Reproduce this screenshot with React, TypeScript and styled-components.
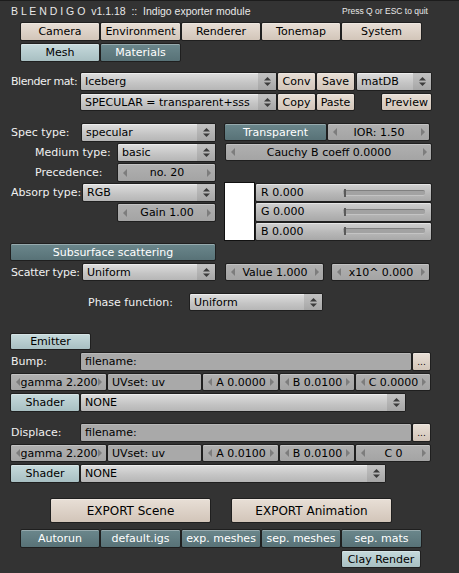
import React from 'react';
import styled, { createGlobalStyle, css } from 'styled-components';

const Global = createGlobalStyle`
  html, body { margin: 0; padding: 0; background: #333333; }
  body { font-family: "DejaVu Sans", "Liberation Sans", sans-serif; }
`;

const Page = styled.div`
  width: 459px;
  height: 573px;
  box-sizing: border-box;
  overflow: hidden;
  background: #333333;
  border-top: 1px solid #1c1c1c;
  font-size: 11px;
  color: #000;
`;

const TitleBar = styled.div`
  display: flex;
  align-items: center;
  height: 20px;
  padding-left: 11px;
  color: #e8e8e8;
  font-family: "Liberation Sans", Arial, sans-serif;
`;

const TitleMain = styled.div`
  flex: 1;
  font-size: 10.5px;
  white-space: nowrap;
`;

const TitleHint = styled.div`
  width: 85px;
  margin-right: 32px;
  font-size: 8.5px;
  white-space: nowrap;
`;

const Row = styled.div<{ $mt?: number; $pl?: number; $h?: number }>`
  display: flex;
  align-items: stretch;
  height: ${p => p.$h ?? 19}px;
  margin-top: ${p => p.$mt ?? 0}px;
  padding-left: ${p => p.$pl ?? 0}px;
`;

const Label = styled.div<{ $w: number; $pl?: number; $ls?: number }>`
  box-sizing: border-box;
  flex-shrink: 0;
  width: ${p => p.$w}px;
  padding-left: ${p => p.$pl ?? 0}px;
  letter-spacing: ${p => p.$ls ?? 0}px;
  display: flex;
  align-items: center;
  color: #f0f0f0;
  white-space: nowrap;
`;

type Tone = 'beige' | 'teal' | 'mint';

const tones = {
  beige: css`
    background: linear-gradient(#e8dfd6, #d2c5b9);
    color: #000;
  `,
  teal: css`
    background: linear-gradient(#6b878c, #587277);
    color: #fff;
  `,
  mint: css`
    background: linear-gradient(#c6dadc, #a8bfc2);
    color: #000;
  `,
};

const widget = css`
  box-sizing: border-box;
  flex-shrink: 0;
  height: 100%;
  border: 1px solid #1f1f1f;
  border-radius: 2px;
  white-space: nowrap;
  overflow: hidden;
`;

const Button = styled.div<{ $w: number; $tone: Tone; $ml?: number; $fs?: number }>`
  ${widget};
  width: ${p => p.$w}px;
  margin-left: ${p => p.$ml ?? 0}px;
  font-size: ${p => p.$fs ?? 11}px;
  display: flex;
  align-items: center;
  justify-content: center;
  box-shadow: inset 0 1px 0 rgba(255, 255, 255, 0.3);
  ${p => tones[p.$tone]}
`;

const NumBox = styled.div<{ $w: number; $ml?: number }>`
  ${widget};
  width: ${p => p.$w}px;
  margin-left: ${p => p.$ml ?? 0}px;
  display: flex;
  align-items: center;
  padding: 0 4px 0 5px;
  background: linear-gradient(#b0b0b0, #a4a4a4);
  box-shadow: inset 0 1px 0 rgba(255, 255, 255, 0.25);
`;

const NumText = styled.span`
  flex: 1;
  text-align: center;
`;

const Arrow = styled.span<{ $dir: 'left' | 'right' }>`
  flex-shrink: 0;
  width: 0;
  height: 0;
  border-top: 4px solid transparent;
  border-bottom: 4px solid transparent;
  ${p =>
    p.$dir === 'left'
      ? css`border-right: 4px solid #7d7d7d;`
      : css`border-left: 4px solid #7d7d7d;`}
`;

const Field = styled.div<{ $w: number }>`
  ${widget};
  width: ${p => p.$w}px;
  display: flex;
  align-items: center;
  padding-left: 4px;
  background: #a9a9a9;
  box-shadow: inset 0 1px 0 rgba(255, 255, 255, 0.2);
`;

const MenuBox = styled.div<{ $w: number; $ml?: number }>`
  ${widget};
  width: ${p => p.$w}px;
  margin-left: ${p => p.$ml ?? 0}px;
  display: flex;
  align-items: stretch;
  background: linear-gradient(#dedede, #c4c4c4 60%, #b6b6b6);
  box-shadow: inset 0 1px 0 rgba(255, 255, 255, 0.5);
`;

const MenuText = styled.span`
  flex: 1;
  display: flex;
  align-items: center;
  padding-left: 4px;
  overflow: hidden;
`;

const MenuEnd = styled.span`
  width: 18px;
  display: flex;
  align-items: center;
  justify-content: center;
  background: linear-gradient(#c2c2c2, #a6a6a6);
`;

const Middle = styled.div`
  display: flex;
  gap: 8px;
  margin-top: 12px;
  padding-left: 11px;
  height: 118px;
`;

const Column = styled.div<{ $w: number; $gap?: number }>`
  display: flex;
  flex-direction: column;
  gap: ${p => p.$gap ?? 0}px;
  width: ${p => p.$w}px;
`;

const ColorBlock = styled.div`
  display: flex;
  margin-top: 21px;
  height: 59px;
`;

const Swatch = styled.div`
  box-sizing: border-box;
  width: 31px;
  height: 100%;
  background: #ffffff;
  border: 1px solid #111;
`;

const Sliders = styled.div`
  display: flex;
  flex-direction: column;
  width: 177px;
  padding-top: 1px;
`;

const SliderBox = styled.div`
  ${widget};
  flex: 1;
  display: flex;
  align-items: center;
  padding: 0 6px 0 5px;
  background: linear-gradient(#d0d0d0, #b8b8b8 55%, #a8a8a8);
  box-shadow: inset 0 1px 0 rgba(255, 255, 255, 0.45);
`;

const SliderLabel = styled.span`
  width: 82px;
  flex-shrink: 0;
`;

const Track = styled.span`
  flex: 1;
  height: 4px;
  display: flex;
  align-items: center;
  border-radius: 2px;
  background: #a2a2a2;
  border-top: 1px solid #808080;
  border-bottom: 1px solid #c4c4c4;
`;

const Handle = styled.span`
  width: 2px;
  height: 8px;
  margin-left: 1px;
  background: #5a5a5a;
`;

const UpDown = () => (
  <svg width="7" height="9" viewBox="0 0 7 9">
    <polygon points="0,3.5 3.5,0 7,3.5" fill="#3c3c3c" />
    <polygon points="0,5.5 3.5,9 7,5.5" fill="#3c3c3c" />
  </svg>
);

const Menu = ({ w, ml, children }: { w: number; ml?: number; children: React.ReactNode }) => (
  <MenuBox $w={w} $ml={ml}>
    <MenuText>{children}</MenuText>
    <MenuEnd>
      <UpDown />
    </MenuEnd>
  </MenuBox>
);

const Num = ({ w, ml, children }: { w: number; ml?: number; children: React.ReactNode }) => (
  <NumBox $w={w} $ml={ml}>
    <Arrow $dir="left" />
    <NumText>{children}</NumText>
    <Arrow $dir="right" />
  </NumBox>
);

const Slider = ({ label }: { label: string }) => (
  <SliderBox>
    <SliderLabel>{label}</SliderLabel>
    <Track>
      <Handle />
    </Track>
  </SliderBox>
);

const tabs = [
  { t: 'Camera', w: 80 },
  { t: 'Environment', w: 81 },
  { t: 'Renderer', w: 80 },
  { t: 'Tonemap', w: 80 },
  { t: 'System', w: 81 },
];

const toggles = [
  { t: 'Autorun', w: 80 },
  { t: 'default.igs', w: 81 },
  { t: 'exp. meshes', w: 80 },
  { t: 'sep. meshes', w: 80 },
  { t: 'sep. mats', w: 81 },
];

const MapBlock = ({ label, a, c, menuW, mt }: { label: string; a: string; c: string; menuW: number; mt: number }) => (
  <>
    <Row $mt={mt} $pl={11}>
      <Label $w={69}>{label}</Label>
      <Field $w={332}>filename:</Field>
      <Button $w={19} $tone="beige" $fs={9}>...</Button>
    </Row>
    <Row $mt={2} $pl={10} $h={18}>
      <Num w={97}>gamma 2.200</Num>
      <Field $w={95}>UVset: uv</Field>
      <Num w={77}>A {a}</Num>
      <Num w={76}>B 0.0100</Num>
      <Num w={76}>{c}</Num>
    </Row>
    <Row $mt={2} $pl={10}>
      <Button $w={70} $tone="mint">Shader</Button>
      <Menu w={menuW}>NONE</Menu>
    </Row>
  </>
);

export default function App() {
  return (
    <>
      <Global />
      <Page>
        <TitleBar>
          <TitleMain>B L E N D I G O&nbsp; v1.1.18&nbsp; ::&nbsp; Indigo exporter module</TitleMain>
          <TitleHint>Press Q or ESC to quit</TitleHint>
        </TitleBar>

        <Row $mt={1} $pl={20}>
          {tabs.map(b => (
            <Button key={b.t} $w={b.w} $tone="beige">{b.t}</Button>
          ))}
        </Row>
        <Row $mt={2} $pl={20}>
          <Button $w={80} $tone="mint">Mesh</Button>
          <Button $w={81} $tone="teal">Materials</Button>
        </Row>

        <Row $mt={10} $pl={11}>
          <Label $w={69} $ls={-0.45}>Blender mat:</Label>
          <Menu w={197}>Iceberg</Menu>
          <Button $w={39} $tone="beige">Conv</Button>
          <Button $w={39} $tone="beige">Save</Button>
          <Menu w={76} ml={1}>matDB</Menu>
        </Row>
        <Row $mt={2} $pl={80} $h={18}>
          <Menu w={197}>SPECULAR = transparent+sss</Menu>
          <Button $w={39} $tone="beige">Copy</Button>
          <Button $w={39} $tone="beige">Paste</Button>
          <Button $w={51} $tone="beige" $ml={26}>Preview</Button>
        </Row>

        <Middle>
          <Column $w={205} $gap={1}>
            <Row>
              <Label $w={70}>Spec type:</Label>
              <Menu w={135}>specular</Menu>
            </Row>
            <Row>
              <Label $w={106} $pl={24}>Medium type:</Label>
              <Menu w={99}>basic</Menu>
            </Row>
            <Row>
              <Label $w={106} $pl={24}>Precedence:</Label>
              <Num w={99}>no. 20</Num>
            </Row>
            <Row>
              <Label $w={71}>Absorp type:</Label>
              <Menu w={134}>RGB</Menu>
            </Row>
            <Row $pl={106}>
              <Num w={99}>Gain 1.00</Num>
            </Row>
          </Column>
          <Column $w={208}>
            <Row $h={18}>
              <Button $w={103} $tone="teal">Transparent</Button>
              <Num w={103}>IOR: 1.50</Num>
            </Row>
            <Row $h={18} $mt={2} $pl={1}>
              <Num w={207}>Cauchy B coeff 0.0000</Num>
            </Row>
            <ColorBlock>
              <Swatch />
              <Sliders>
                <Slider label="R 0.000" />
                <Slider label="G 0.000" />
                <Slider label="B 0.000" />
              </Sliders>
            </ColorBlock>
          </Column>
        </Middle>

        <Row $mt={2} $pl={10} $h={18}>
          <Button $w={206} $tone="teal">Subsurface scattering</Button>
        </Row>
        <Row $mt={2} $pl={11} $h={18}>
          <Label $w={71} $ls={-0.2}>Scatter type:</Label>
          <Menu w={134}>Uniform</Menu>
          <Num w={99} ml={9}>Value 1.000</Num>
          <Num w={99} ml={7}>x10^ 0.000</Num>
        </Row>
        <Row $mt={12} $pl={88} $h={18}>
          <Label $w={101}>Phase function:</Label>
          <Menu w={134}>Uniform</Menu>
        </Row>

        <Row $mt={22} $pl={10} $h={17}>
          <Button $w={81} $tone="mint">Emitter</Button>
        </Row>

        <MapBlock label="Bump:" a="0.0000" c="C 0.0000" menuW={326} mt={2} />
        <MapBlock label="Displace:" a="0.0100" c="C 0" menuW={306} mt={11} />

        <Row $mt={15} $pl={50} $h={25}>
          <Button $w={161} $tone="beige" $fs={12}>EXPORT Scene</Button>
          <Button $w={161} $tone="beige" $fs={12} $ml={20}>EXPORT Animation</Button>
        </Row>
        <Row $mt={6} $pl={20}>
          {toggles.map(b => (
            <Button key={b.t} $w={b.w} $tone="teal">{b.t}</Button>
          ))}
        </Row>
        <Row $mt={2} $pl={341} $h={18}>
          <Button $w={80} $tone="mint">Clay Render</Button>
        </Row>
      </Page>
    </>
  );
}
